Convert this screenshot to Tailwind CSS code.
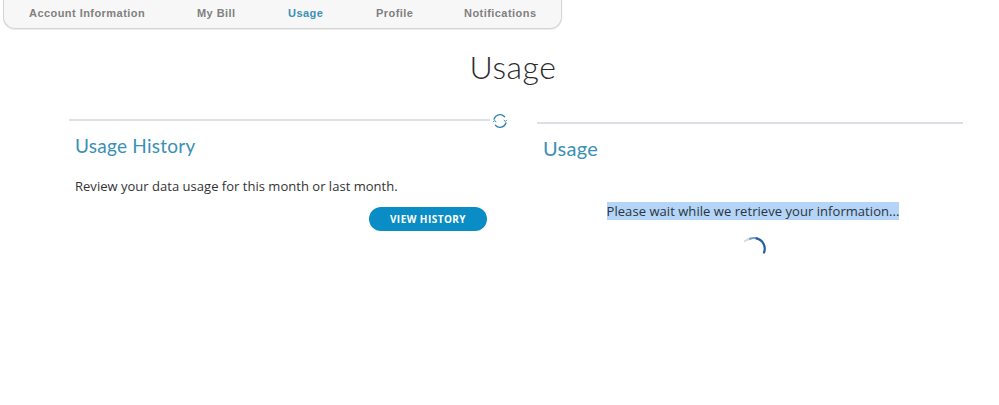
<!DOCTYPE html>
<html>
<head>
<meta charset="utf-8">
<script src="https://cdn.jsdelivr.net/npm/@tailwindcss/browser@4"></script>
</head>
<body class="bg-white h-[405px] w-[999px] overflow-hidden font-['Open_Sans',sans-serif] text-[#333333]">
  <nav class="ml-[3px] w-[559px] h-[29px] pb-[1px] bg-[#f7f7f7] border border-t-0 border-[#d4d4d4] rounded-b-[12px] shadow-[0_1px_1px_rgba(0,0,0,0.08)] flex items-center font-['Liberation_Sans',sans-serif] font-bold text-[11px] tracking-[0.45px] text-[#808080]">
    <a class="ml-[25px] w-[168px]">Account Information</a>
    <a class="w-[91px]">My Bill</a>
    <a class="w-[88px] text-[#3a90b5]">Usage</a>
    <a class="w-[88px]">Profile</a>
    <a>Notifications</a>
  </nav>
  <h1 class="mt-[18px] ml-[27px] text-center font-['Lato',sans-serif] font-light text-[32px] leading-[40px] text-[#2b2b2b] tracking-[0.5px]">Usage</h1>
  <main class="mt-[20px] ml-[69px] flex items-start">
    <section class="w-[468px] shrink-0">
      <div class="flex items-center h-[26px]">
        <div class="w-[421px] h-[2px] bg-[#dcdfe3]"></div>
        <svg class="ml-[2px] mt-[1px] w-[16px] h-[16px]" viewBox="0 0 16 16" fill="none" stroke="#2f86ad" stroke-width="1.3" stroke-linecap="round">
          <path d="M2 6.2A6.2 6.2 0 0 1 12.6 3.8"/>
          <path d="M14 9.8A6.2 6.2 0 0 1 3.4 12.2"/>
          <path d="M14.6 7.2l-1.2 1.3-1.4-1.2" stroke-width="1"/>
          <path d="M1.4 8.8l1.2-1.3 1.4 1.2" stroke-width="1"/>
        </svg>
      </div>
      <div class="pl-[6px] w-[418px]">
        <h2 class="font-['Lato',sans-serif] font-normal text-[19px] leading-[26px] tracking-[0.25px] text-[#3a90b5]">Usage History</h2>
        <p class="mt-[17px] text-[13px] leading-[20px] tracking-[0.02px]">Review your data usage for this month or last month.</p>
        <div class="mt-[11px] flex justify-end">
          <button class="w-[118px] h-[24px] rounded-full bg-[#0a8cc4] text-white text-[10px] font-bold tracking-[0.45px]">VIEW HISTORY</button>
        </div>
      </div>
    </section>
    <section class="w-[426px] shrink-0 pt-[15px]">
      <div class="h-[2px] bg-[#dcdfe3]"></div>
      <h2 class="mt-[11px] ml-[6px] font-['Lato',sans-serif] font-normal text-[20px] leading-[26px] tracking-[0.3px] text-[#3a90b5]">Usage</h2>
      <div class="mt-[41px] ml-[6px] flex flex-col items-center">
        <p class="text-[13px] leading-[18px] tracking-[0.05px] bg-[#b4d5f7] text-[#2b3440]">Please wait while we retrieve your information...</p>
        <svg class="mt-[15px] ml-[2px] w-[26px] h-[26px]" viewBox="0 0 26 26" fill="none" stroke-width="2.2" stroke-linecap="round">
          <path d="M4 6A11 11 0 0 1 10 3.6" stroke="#d3dde8"/>
          <path d="M9 3.8A11 11 0 0 1 16 3.4" stroke="#7a9fc6"/>
          <path d="M15.5 3.4A10.5 10.5 0 0 1 23 17.5" stroke="#25609f"/>
        </svg>
      </div>
    </section>
  </main>
</body>
</html>
